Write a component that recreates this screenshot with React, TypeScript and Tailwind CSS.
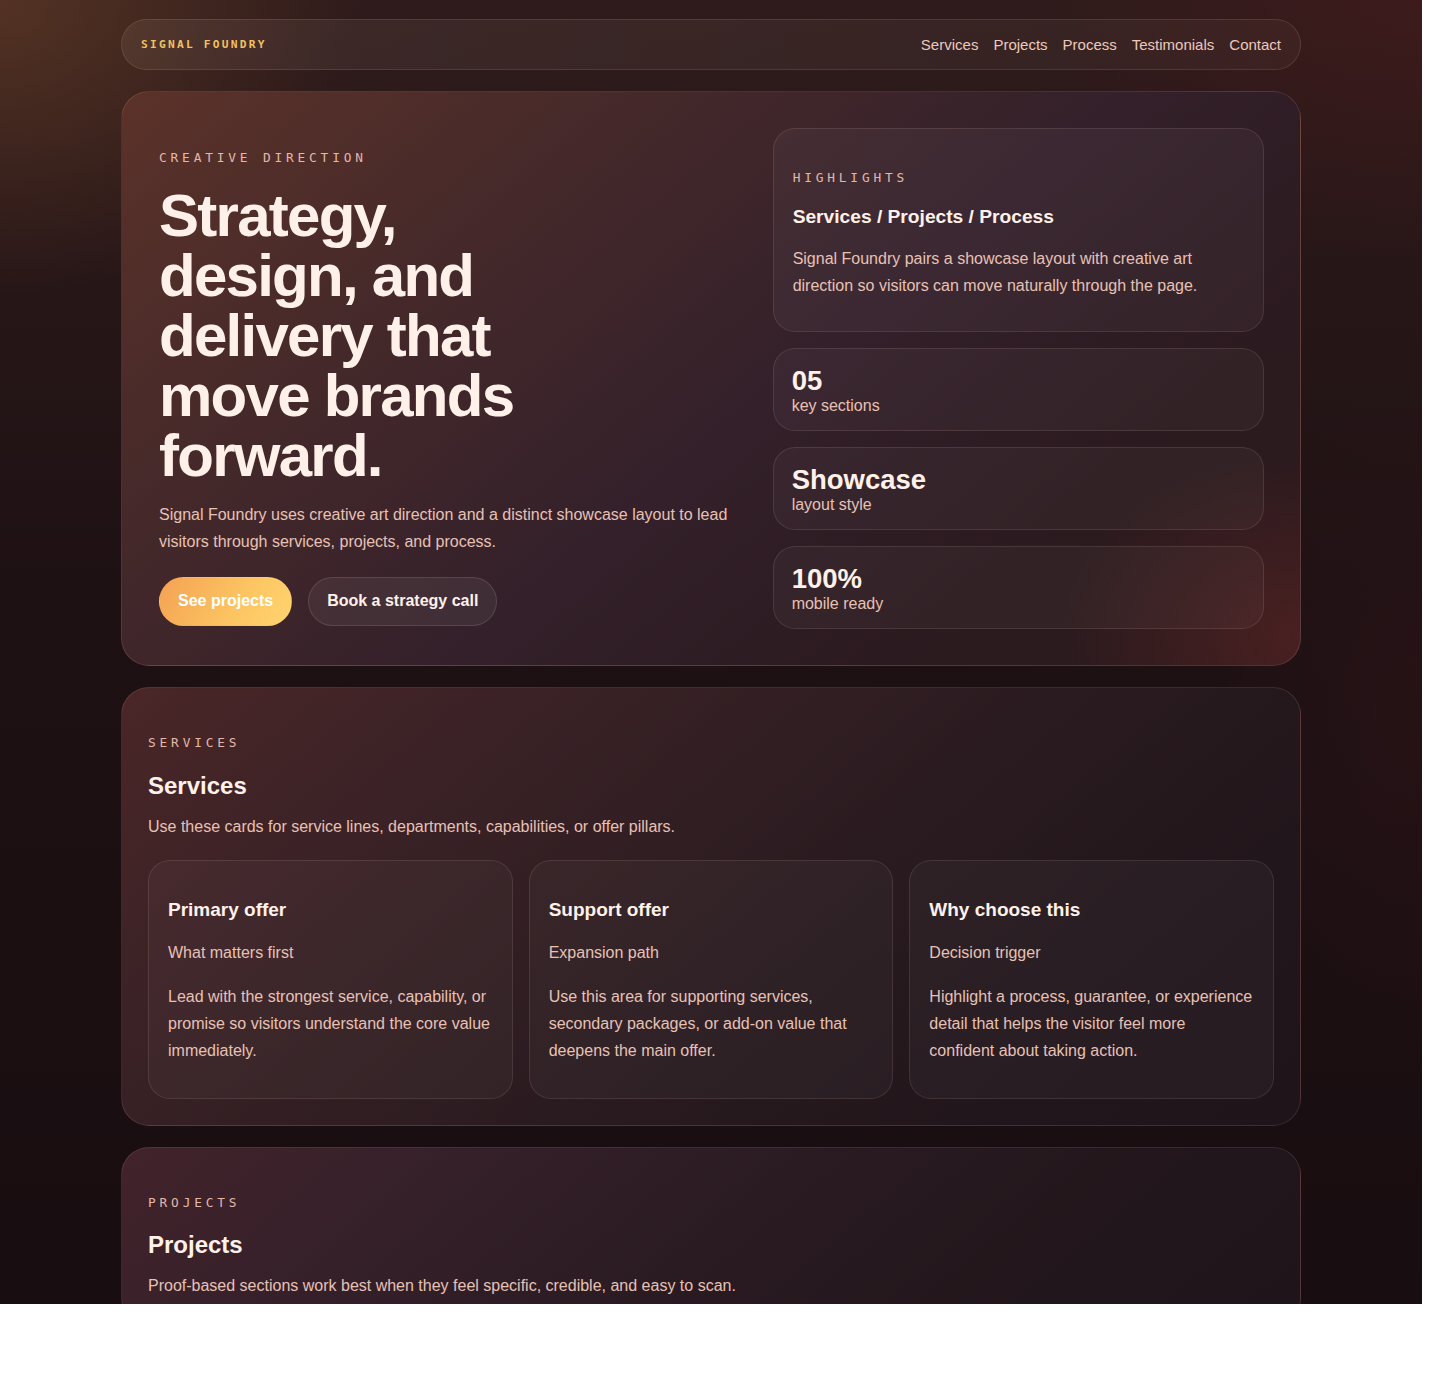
const mono = "[font-family:'DejaVu_Sans_Mono',monospace]";

function Eyebrow({ children }: { children: string }) {
  return (
    <div className={`${mono} text-[12.8px] leading-[20px] tracking-[0.3em] text-[#e3b8ab] uppercase`}>
      {children}
    </div>
  );
}

function Stat({ value, label }: { value: string; label: string }) {
  return (
    <div className="h-[83px] rounded-[22px] border border-[rgba(255,215,205,0.11)] bg-white/[0.035] px-[18px] pt-[17px] pb-[14px]">
      <div className="text-[27.5px] leading-[30px] font-bold text-[#fff1ea]">{value}</div>
      <div className="text-[16px] leading-[20px] text-[#e8c1b5]">{label}</div>
    </div>
  );
}

function ServiceCard({ title, sub, body }: { title: string; sub: string; body: string }) {
  return (
    <div className="rounded-[22px] border border-[rgba(255,215,205,0.11)] bg-white/[0.03] px-[19px] pt-[35.5px] pb-[33.5px]">
      <h3 className="text-[19px] leading-[26px] font-bold text-[#fff1ea]">{title}</h3>
      <p className="mt-[16.5px] text-[16px] leading-[27px] text-[#e8c1b5]">{sub}</p>
      <p className="mt-[17px] text-[16px] leading-[27px] text-[#e8c1b5]">{body}</p>
    </div>
  );
}

export default function App() {
  return (
    <div
      className="relative w-[1422px] h-[1304px] overflow-hidden [font-family:'Liberation_Sans',Arial,sans-serif] bg-[radial-gradient(ellipse_520px_420px_at_0%_0%,rgba(95,58,38,0.75),transparent_70%),radial-gradient(ellipse_560px_380px_at_100%_0%,rgba(72,26,28,0.55),transparent_70%),radial-gradient(ellipse_300px_500px_at_100%_55%,rgba(60,24,28,0.3),transparent_70%),linear-gradient(180deg,#2f1b1b_0%,#1e1114_45%,#180d10_100%)]"
    >
      <div className="mx-auto w-[1180px] pt-[19px] flex flex-col gap-[21px]">
        {/* Nav */}
        <nav className="h-[51px] flex items-center justify-between rounded-full border border-[rgba(255,215,205,0.12)] bg-[linear-gradient(90deg,rgba(255,235,225,0.07),rgba(255,235,225,0.04))] pl-[19px] pr-[19px]">
          <div className={`${mono} mt-[2px] text-[11.2px] tracking-[0.2em] font-bold text-[#f2c160]`}>SIGNAL FOUNDRY</div>
          <div className="flex items-center gap-[15px] pt-[1px] text-[15px] text-[#edc9bd]">
            <span>Services</span>
            <span>Projects</span>
            <span>Process</span>
            <span>Testimonials</span>
            <span>Contact</span>
          </div>
        </nav>

        {/* Hero */}
        <section className="rounded-[28px] border border-[rgba(255,215,205,0.12)] bg-[radial-gradient(ellipse_340px_260px_at_100%_95%,rgba(115,40,38,0.42),transparent_70%),linear-gradient(140deg,#5b3229_0%,#45292a_28%,#33202a_55%,#2b1a1f_78%,#2c1a1d_100%)] py-[36px] pl-[37px] pr-[36px] grid grid-cols-[1.2fr_1fr] gap-6 items-start">
          <div className="pt-5">
            <Eyebrow>Creative direction</Eyebrow>
            <h1 className="mt-[18px] max-w-[430px] text-[60px] leading-[60px] font-bold tracking-[-0.029em] text-[#fff1ea]">
              Strategy, design, and delivery that move brands forward.
            </h1>
            <p className="mt-[15px] text-[16px] leading-[27px] text-[#e8c1b5]">
              Signal Foundry uses creative art direction and a distinct showcase layout to lead visitors through services, projects, and process.
            </p>
            <div className="mt-[21.5px] flex gap-4">
              <button className="h-[49px] rounded-full px-[18px] border border-transparent bg-[linear-gradient(120deg,#f4a253_0%,#fcc562_60%,#ffd470_100%)] text-[16px] font-bold text-white">
                See projects
              </button>
              <button className="h-[49px] rounded-full px-[18px] border border-[rgba(255,215,205,0.13)] bg-white/[0.06] text-[16px] font-bold text-[#fff1ea]">
                Book a strategy call
              </button>
            </div>
          </div>

          <div className="flex flex-col gap-4">
            <div className="rounded-[22px] border border-[rgba(255,215,205,0.11)] bg-white/[0.04] px-[19px] pt-[39px] pb-[32px]">
              <Eyebrow>Highlights</Eyebrow>
              <h2 className="mt-4 text-[19.2px] leading-[26px] font-bold text-[#fff1ea]">Services / Projects / Process</h2>
              <p className="mt-[15px] text-[16px] leading-[27px] text-[#e8c1b5]">
                Signal Foundry pairs a showcase layout with creative art direction so visitors can move naturally through the page.
              </p>
            </div>
            <Stat value="05" label="key sections" />
            <Stat value="Showcase" label="layout style" />
            <Stat value="100%" label="mobile ready" />
          </div>
        </section>

        {/* Services */}
        <section className="rounded-[28px] border border-[rgba(255,215,205,0.11)] bg-[linear-gradient(140deg,#4a2627_0%,#3a2226_25%,#2a1b20_55%,#21161b_80%,#1f1419_100%)] px-[26px] pt-[45px] pb-[26px]">
          <Eyebrow>Services</Eyebrow>
          <h2 className="mt-[16.5px] text-[24px] leading-[31px] font-bold text-[#fff1ea]">Services</h2>
          <p className="mt-[12px] text-[16px] leading-[27px] text-[#e8c1b5]">
            Use these cards for service lines, departments, capabilities, or offer pillars.
          </p>
          <div className="mt-[20.5px] grid grid-cols-3 gap-4">
            <ServiceCard
              title="Primary offer"
              sub="What matters first"
              body="Lead with the strongest service, capability, or promise so visitors understand the core value immediately."
            />
            <ServiceCard
              title="Support offer"
              sub="Expansion path"
              body="Use this area for supporting services, secondary packages, or add-on value that deepens the main offer."
            />
            <ServiceCard
              title="Why choose this"
              sub="Decision trigger"
              body="Highlight a process, guarantee, or experience detail that helps the visitor feel more confident about taking action."
            />
          </div>
        </section>

        {/* Projects */}
        <section className="rounded-[28px] border border-[rgba(255,215,205,0.11)] bg-[linear-gradient(140deg,#42232a_0%,#35202a_25%,#281a20_55%,#21161b_80%,#1f1419_100%)] px-[26px] pt-[45px] pb-[26px]">
          <Eyebrow>Projects</Eyebrow>
          <h2 className="mt-[16.5px] text-[24px] leading-[31px] font-bold text-[#fff1ea]">Projects</h2>
          <p className="mt-[12px] text-[16px] leading-[27px] text-[#e8c1b5]">
            Proof-based sections work best when they feel specific, credible, and easy to scan.
          </p>
        </section>
      </div>
    </div>
  );
}
